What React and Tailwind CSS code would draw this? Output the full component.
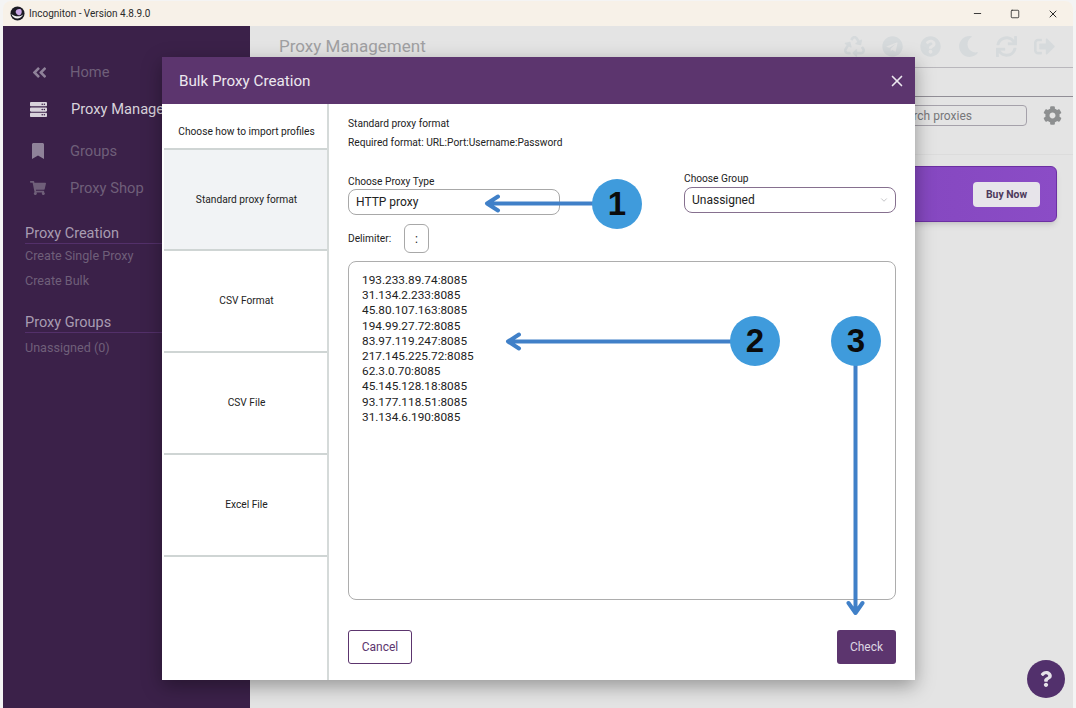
import { FaAngleDoubleLeft, FaServer, FaBookmark, FaShoppingCart, FaRecycle, FaTelegram, FaQuestionCircle, FaMoon, FaSync, FaSignOutAlt, FaCog, FaQuestion } from "react-icons/fa";
import { ChevronDown, Minus, Square, X } from "lucide-react";

const proxies = [
  "193.233.89.74:8085",
  "31.134.2.233:8085",
  "45.80.107.163:8085",
  "194.99.27.72:8085",
  "83.97.119.247:8085",
  "217.145.225.72:8085",
  "62.3.0.70:8085",
  "45.145.128.18:8085",
  "93.177.118.51:8085",
  "31.134.6.190:8085",
];

const Sidebar = () => {
  return (
    <div className="w-[247px] shrink-0 bg-[#3b2149] text-[#6f5f79]">
      <div className="h-[92px] pt-[34px] pl-[27px]">
        <div className="flex h-[24px] items-center">
          <span className="flex w-[40px] pl-[1px] text-[#8f8299]"><FaAngleDoubleLeft size={17} /></span>
          <span className="text-[14.7px]">Home</span>
        </div>
        <div className="mt-[13px] flex h-[24px] items-center text-[#d8d3db]">
          <span className="flex w-[41px]"><FaServer size={17} /></span>
          <span className="text-[14.7px]">Proxy Management</span>
        </div>
      </div>
      <div className="pl-[27px] pt-[21px]">
        <div className="flex h-[24px] items-center">
          <span className="flex w-[40px] text-[#8f8299]"><FaBookmark size={16} /></span>
          <span className="text-[14.7px]">Groups</span>
        </div>
        <div className="mt-[13px] flex h-[24px] items-center">
          <span className="flex w-[40px] text-[#6f5f79]"><FaShoppingCart size={16} /></span>
          <span className="text-[14.7px]">Proxy Shop</span>
        </div>
      </div>
      <div className="pl-[22px] pt-[23px]">
        <div className="h-[21px] border-b border-[#53306a] text-[14.5px] leading-[22px] text-[#a89cb1]">Proxy Creation</div>
        <div className="mt-[2px] text-[12.6px] leading-[20px]">Create Single Proxy</div>
        <div className="mt-[5px] text-[12.6px] leading-[20px]">Create Bulk</div>
        <div className="mt-[22px] h-[20px] border-b border-[#53306a] text-[14.5px] leading-[20px] text-[#a89cb1]">Proxy Groups</div>
        <div className="mt-[5px] text-[12.6px] leading-[20px]">Unassigned (0)</div>
      </div>
    </div>
  );
};

const MainPanel = () => {
  return (
    <div className="relative flex-1 bg-[#e4e4e4]">
      <div className="flex h-[42px] items-center justify-between border-b border-[#b9b7bc] pl-[29px] pr-[18px]">
        <span className="text-[17px] text-[#a0a0a2]">Proxy Management</span>
        <div className="flex items-center gap-[17px] text-[#d6dadc]">
          <FaRecycle size={21} />
          <FaTelegram size={21} />
          <FaQuestionCircle size={21} />
          <FaMoon size={21} />
          <FaSync size={21} />
          <FaSignOutAlt size={21} />
        </div>
      </div>
      <div className="h-[29px] border-b border-[#918e96]" />
      <div className="flex h-[58px] justify-end border-b border-[#dcdcdc] pr-[11px] pt-[8px]">
        <div className="flex h-[21px] w-[200px] items-center justify-end rounded-[4px] border border-[#a5a1aa] pr-[54px] text-[12px] text-[#77777a]">Search proxies</div>
        <span className="ml-[16px] mt-[1px] text-[#8d8f90]"><FaCog size={19} /></span>
      </div>
      <div className="mr-[16px] ml-[40px] mt-[11px] flex h-[56px] items-center justify-end rounded-[6px] border border-[#6c2fa3] bg-gradient-to-r from-[#6d35a8] to-[#8b4cc6] pr-[16px] shadow-md">
        <div className="flex h-[25px] w-[67px] items-center justify-center rounded-[4px] bg-[#e7e4ea] pt-[2px] text-[10.4px] font-bold text-[#4d3a5c]">Buy Now</div>
      </div>
      <div className="absolute bottom-[10px] right-[8px] flex h-[38px] w-[38px] items-center justify-center rounded-full bg-[#52306c] text-[#e6e1e9]">
        <FaQuestion size={16} />
      </div>
    </div>
  );
};

const ImportTabs = () => {
  const tabs = ["Standard proxy format", "CSV Format", "CSV File", "Excel File"];
  return (
    <div className="w-[167px] shrink-0 border-r-2 border-[#d5dad9] pl-[2px]">
      <div className="flex h-[46px] items-center justify-center border-b-2 border-[#cfd5d4] pl-[2px] pt-[12px] text-[10.2px]">Choose how to import profiles</div>
      {tabs.map((t, i) => (
        <div key={t} className={"flex items-center justify-center border-b-2 border-[#cfd5d4] pl-[2px] text-[10.2px] " + (i === 0 ? "h-[101px] bg-[#f1f3f5]" : "h-[102px] bg-white")}>
          {t}
        </div>
      ))}
    </div>
  );
};

const BulkModal = () => {
  return (
    <div className="absolute left-[162px] top-[57px] flex h-[623px] w-[753px] flex-col bg-white text-[#222] shadow-[0_6px_18px_rgba(0,0,0,0.35)]">
      <div className="flex h-[47px] shrink-0 items-center justify-between bg-[#5c356e] pl-[17px] pr-[9px] text-[#ece8ef]">
        <span className="pt-[2px] text-[15.2px]">Bulk Proxy Creation</span>
        <X size={18} strokeWidth={2.2} />
      </div>
      <div className="flex min-h-0 flex-1">
        <ImportTabs />
        <div className="flex-1 pl-[19px] pr-[19px] pt-[13px]">
          <div className="text-[10.2px] leading-[14px]">Standard proxy format</div>
          <div className="mt-[5px] text-[10.2px] leading-[14px]">Required format: URL:Port:Username:Password</div>
          <div className="mt-[24px] flex items-start justify-between">
            <div className="pt-[1px]">
              <div className="text-[10.2px] leading-[14px]">Choose Proxy Type</div>
              <div className="flex h-[26px] w-[212px] items-center rounded-[8px] border border-[#a8a8a8] pl-[7px] text-[12px]">HTTP proxy</div>
            </div>
            <div className="-mt-[2px]">
              <div className="text-[10.2px] leading-[14px]">Choose Group</div>
              <div className="mt-[1px] flex h-[26px] w-[212px] items-center justify-between rounded-[8px] border-[1.5px] border-[#86708f] pl-[7px] pr-[6px] text-[12px]">
                Unassigned
                <ChevronDown size={10} className="text-[#b9b9bd]" />
              </div>
            </div>
          </div>
          <div className="mt-[9px] flex items-center text-[10.2px]">
            <span className="w-[56px]">Delimiter:</span>
            <span className="flex h-[29px] w-[25px] items-center justify-center rounded-[6px] border border-[#a8a8a8] text-[12px]">:</span>
          </div>
          <div className="mt-[8px] h-[339px] rounded-[8px] border border-[#adadad] px-[13px] pt-[11px] text-[11.8px] leading-[15.2px]">
            {proxies.map((p) => (
              <div key={p}>{p}</div>
            ))}
          </div>
          <div className="mt-[30px] flex justify-between">
            <div className="flex h-[34px] w-[64px] items-center justify-center rounded-[3px] border border-[#5c356e] text-[12px] text-[#5c356e]">Cancel</div>
            <div className="flex h-[34px] w-[59px] items-center justify-center rounded-[3px] bg-[#5c356e] text-[12px] text-[#ddd5e2]">Check</div>
          </div>
        </div>
      </div>
    </div>
  );
};

const Marker = ({ n, className }) => (
  <div className={"absolute flex h-[50px] w-[50px] items-center justify-center rounded-full bg-[#3f9bdc] font-['Liberation_Sans',sans-serif] text-[33px] font-bold text-[#0b0b0b] " + className}>
    {n}
  </div>
);

const Callouts = () => {
  return (
    <>
      <svg className="absolute left-0 top-0" width="1076" height="708" fill="none" stroke="#4080c8" strokeWidth="4" strokeLinecap="round" strokeLinejoin="round">
        <path d="M594 203.500H487M498 196.500L487 203.500L498 210.500" />
        <path d="M732 341.500H508M519 334.500L508 341.500L519 348.500" />
        <path d="M855.500 364V613M848.500 603L855.500 613L862.500 603" />
      </svg>
      <Marker n="1" className="left-[592px] top-[179px]" />
      <Marker n="2" className="left-[730px] top-[316px]" />
      <Marker n="3" className="left-[831px] top-[316px]" />
    </>
  );
};

const App = () => {
  return (
    <div className="relative h-[708px] w-[1076px] overflow-hidden bg-[#f4f4f4] font-['Roboto',sans-serif]">
      <div className="ml-[3px] mr-[3px] mt-[1px] flex h-[707px] flex-col overflow-hidden rounded-t-[8px]">
        <div className="flex h-[25px] shrink-0 items-center justify-between bg-[#f7f1e8] pl-[7px] pr-[14px]">
          <div className="flex items-center gap-[4px] text-[10px] text-[#2b2b2b]">
            <svg width="15" height="15" viewBox="0 0 16 16">
              <circle cx="8" cy="8" r="7.500" fill="#1b1b24" />
              <path d="M1.500 8.500C3 14 11 15.500 14 9C10.500 12 5 11.500 1.500 8.500Z" fill="#f2f2f2" />
              <path d="M6 6.500C6 4 9 2.500 11.500 3.500C13 5 13 8 11 9.500C9 10.500 6.500 9 6 6.500Z" fill="#c9a6e6" />
            </svg>
            Incogniton - Version 4.8.9.0
          </div>
          <div className="flex items-center gap-[27px] text-[#2b2b2b]">
            <Minus size={11} />
            <Square size={10} strokeWidth={2} />
            <X size={12} />
          </div>
        </div>
        <div className="flex flex-1">
          <Sidebar />
          <MainPanel />
        </div>
      </div>
      <BulkModal />
      <Callouts />
    </div>
  );
};

export default App;
